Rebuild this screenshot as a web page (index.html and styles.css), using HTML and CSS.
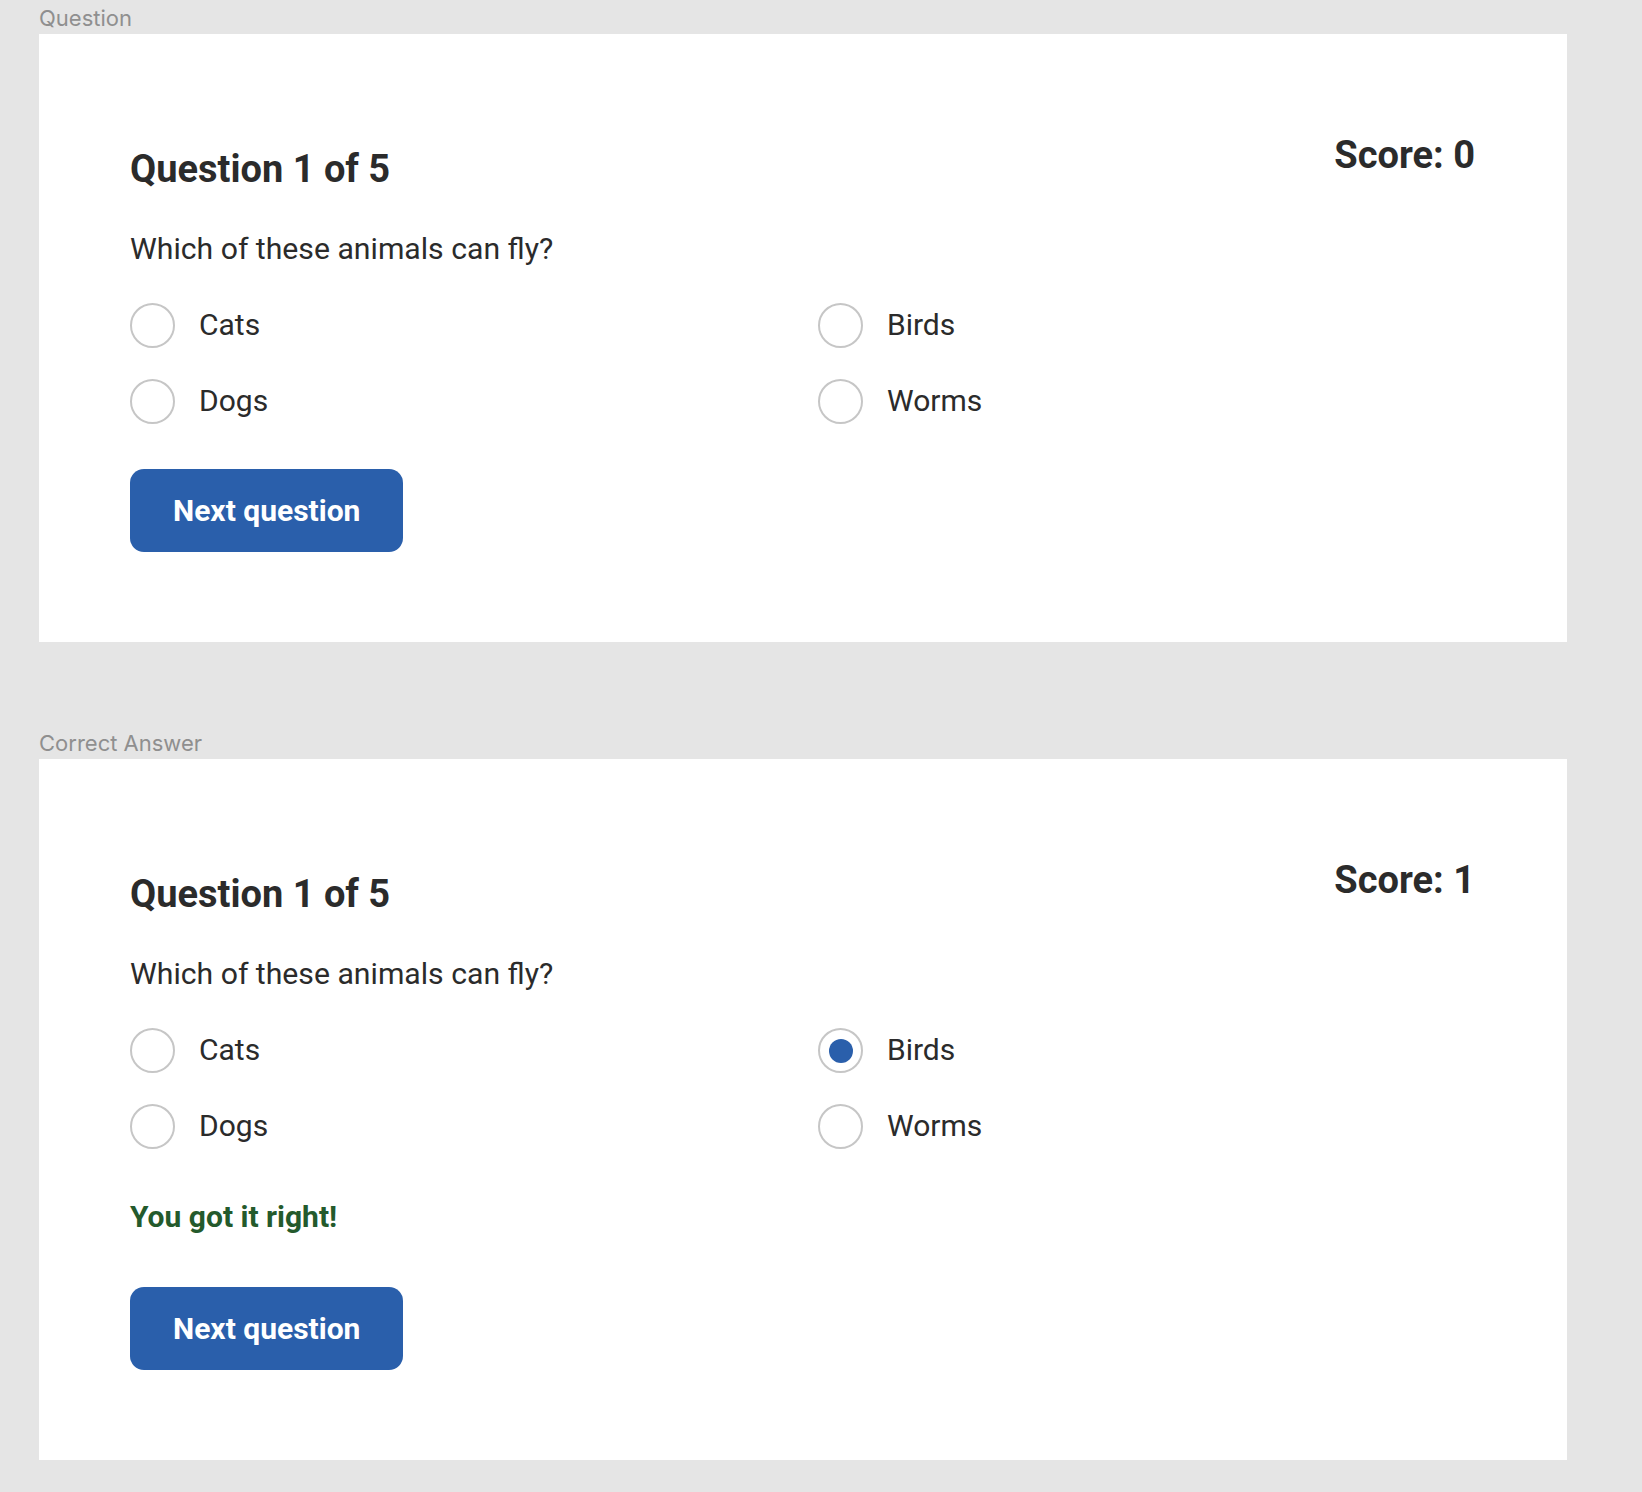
FILE: index.html
```html
<!DOCTYPE html>
<html lang="en">
<head>
<meta charset="utf-8">
<title>Quiz states</title>
<link rel="stylesheet" href="styles.css">
</head>
<body>
<main class="page">
  <section class="frame">
    <div class="frame-label">Question</div>
    <div class="card">
      <div class="card-head">
        <h2 class="q-title">Question 1 of 5</h2>
        <div class="score">Score: 0</div>
      </div>
      <p class="q-text">Which of these animals can fly?</p>
      <div class="options">
        <label class="option"><span class="radio"></span><span class="opt-text">Cats</span></label>
        <label class="option"><span class="radio"></span><span class="opt-text">Birds</span></label>
        <label class="option"><span class="radio"></span><span class="opt-text">Dogs</span></label>
        <label class="option"><span class="radio"></span><span class="opt-text">Worms</span></label>
      </div>
      <button class="next-btn" type="button">Next question</button>
    </div>
  </section>
  <section class="frame frame-second">
    <div class="frame-label">Correct Answer</div>
    <div class="card">
      <div class="card-head">
        <h2 class="q-title">Question 1 of 5</h2>
        <div class="score">Score: 1</div>
      </div>
      <p class="q-text">Which of these animals can fly?</p>
      <div class="options">
        <label class="option"><span class="radio"></span><span class="opt-text">Cats</span></label>
        <label class="option"><span class="radio radio-checked"></span><span class="opt-text">Birds</span></label>
        <label class="option"><span class="radio"></span><span class="opt-text">Dogs</span></label>
        <label class="option"><span class="radio"></span><span class="opt-text">Worms</span></label>
      </div>
      <p class="feedback">You got it right!</p>
      <button class="next-btn" type="button">Next question</button>
    </div>
  </section>
</main>
</body>
</html>
```

FILE: styles.css
```css
html, body {
  margin: 0;
  padding: 0;
  background: #e5e5e5;
}

body {
  font-family: Roboto, "Liberation Sans", Arial, sans-serif;
  color: #2b2b2b;
}

.page {
  padding: 6px 0 32px 39px;
}

.frame {
  width: 1528px;
}

.frame-second {
  margin-top: 89px;
}

.frame-label {
  font-family: Inter, Roboto, "Liberation Sans", sans-serif;
  font-size: 22px;
  line-height: 24px;
  color: #8f8f8f;
  margin-bottom: 4px;
}

.card {
  background: #ffffff;
  display: flex;
  flex-direction: column;
  align-items: flex-start;
  padding: 97px 92px 90px 91px;
}

.card-head {
  display: flex;
  justify-content: space-between;
  align-items: flex-start;
  align-self: stretch;
}

.q-title {
  margin: 16px 0 0;
  font-size: 38px;
  line-height: 44px;
  font-weight: 700;
  color: #2b2b2b;
}

.score {
  margin-top: 2px;
  font-size: 38px;
  line-height: 44px;
  font-weight: 700;
  color: #2b2b2b;
}

.q-text {
  margin: 40px 0 0;
  font-size: 30.2px;
  line-height: 36px;
  color: #2b2b2b;
}

.options {
  margin-top: 36px;
  display: grid;
  grid-template-columns: 688px 1fr;
  row-gap: 31px;
  align-self: stretch;
}

.option {
  display: flex;
  align-items: center;
  gap: 24px;
  height: 45px;
}

.radio {
  box-sizing: border-box;
  width: 45px;
  height: 45px;
  border: 2px solid #c6c6c6;
  border-radius: 50%;
  display: flex;
  align-items: center;
  justify-content: center;
  flex: none;
}

.radio-checked::after {
  content: "";
  width: 24px;
  height: 24px;
  border-radius: 50%;
  background: #2a5fab;
}

.opt-text {
  font-size: 30px;
  line-height: 36px;
  padding-bottom: 2px;
  color: #2b2b2b;
}

.feedback {
  margin: 50px 0 0;
  font-size: 30px;
  line-height: 36px;
  font-weight: 700;
  color: #245a2c;
}

.next-btn {
  margin-top: 45px;
  height: 83px;
  padding: 0 43px;
  border: none;
  border-radius: 14px;
  background: #2a5fab;
  color: #ffffff;
  font-family: Roboto, "Liberation Sans", Arial, sans-serif;
  font-size: 30px;
  font-weight: 700;
  line-height: 36px;
}

.feedback + .next-btn {
  margin-top: 52px;
}
```
